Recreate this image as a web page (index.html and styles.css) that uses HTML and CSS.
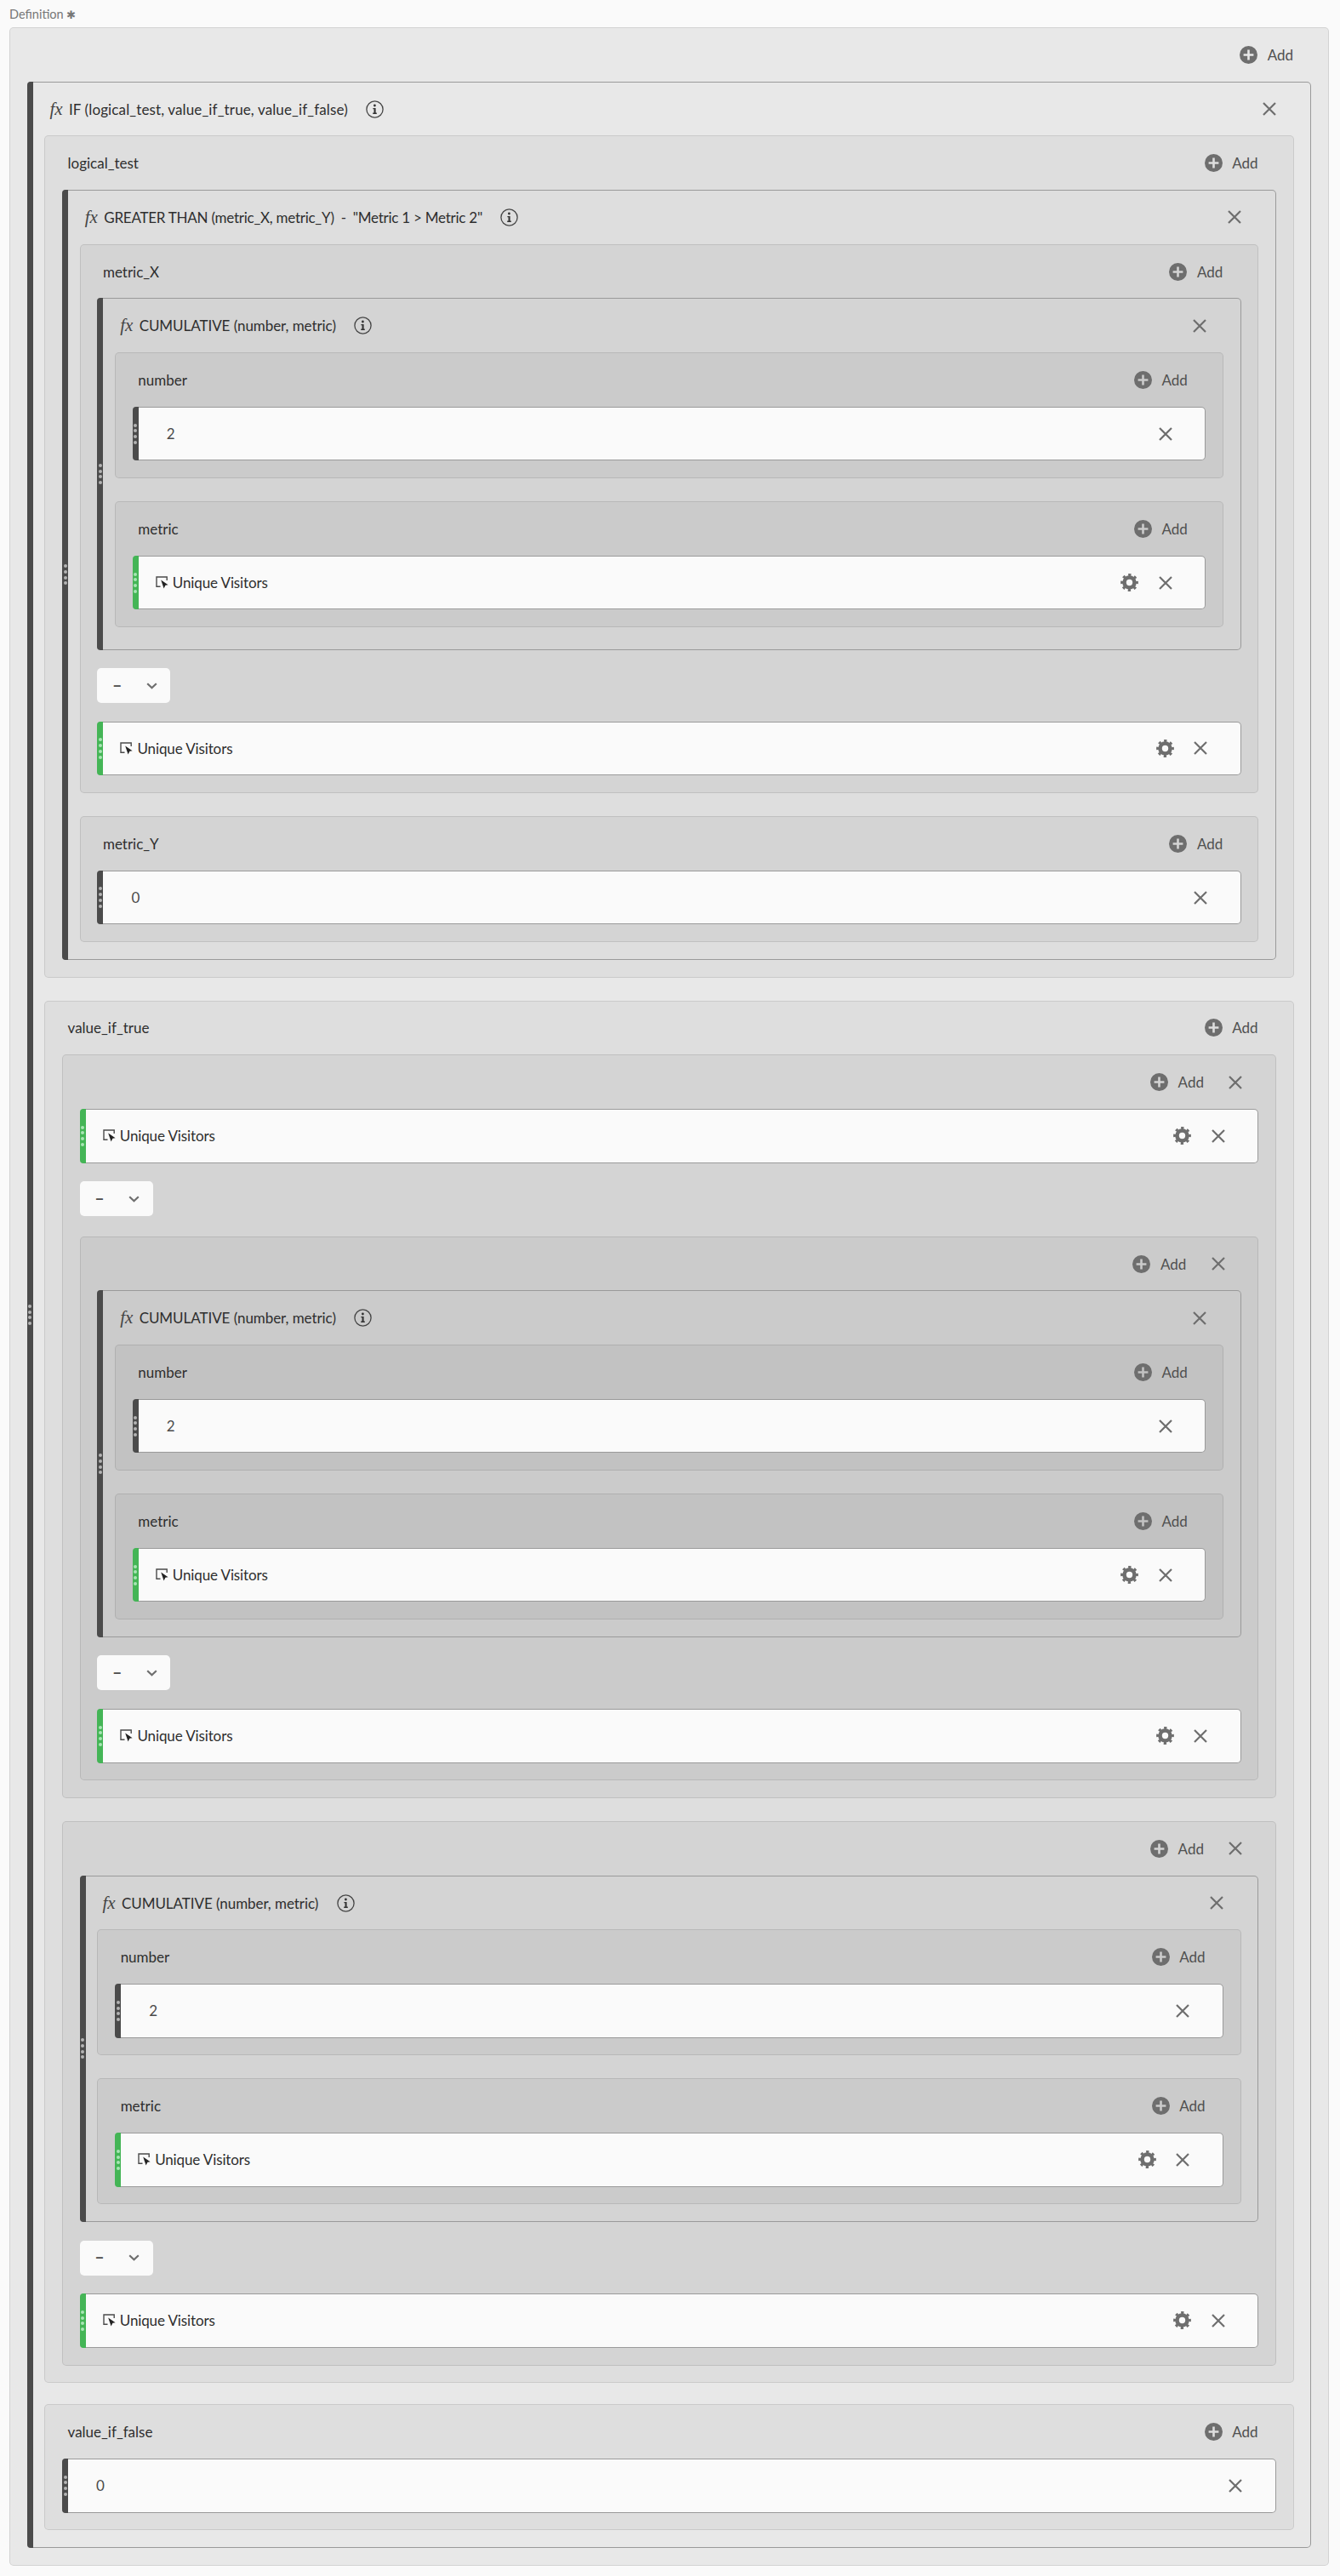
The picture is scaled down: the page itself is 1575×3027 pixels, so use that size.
FILE: index.html
```html
<!DOCTYPE html>
<html lang="en">
<head>
<meta charset="utf-8">
<title>Definition</title>
<link rel="stylesheet" href="styles.css">
</head>
<body>
<svg class="sprite" width="0" height="0" aria-hidden="true">
  <symbol id="i-plus" viewBox="0 0 21 21"><path fill-rule="evenodd" d="M10.5 0a10.5 10.5 0 1 0 0 21a10.5 10.5 0 1 0 0-21zM9.2 4.6h2.6v4.6h4.6v2.6h-4.6v4.6H9.2v-4.6H4.6V9.2h4.6z"/></symbol>
  <symbol id="i-x" viewBox="0 0 16 16"><path d="M1 1L15 15M15 1L1 15" fill="none" stroke-width="2.2"/></symbol>
  <symbol id="i-gear" viewBox="0 0 21 21"><circle cx="10.5" cy="10.5" r="6" fill="none" stroke-width="4.6"/><circle cx="10.5" cy="10.5" r="8.9" fill="none" stroke-width="3" stroke-dasharray="3.2 3.79" transform="rotate(-10.3 10.5 10.5)"/></symbol>
  <symbol id="i-metric" viewBox="0 0 15 15"><path d="M5.5 12.2H1V1h12.2v4" fill="none" stroke="#4b4b4b" stroke-width="1.4"/><path d="M6.2 4.4L14.6 10.2L11.4 10.8L9.6 14.6z" fill="#222"/></symbol>
  <symbol id="i-info" viewBox="0 0 21 21"><circle cx="10.5" cy="10.5" r="9.6" fill="none" stroke="#444" stroke-width="1.3"/><circle cx="10.4" cy="6" r="1.4" fill="#333"/><path d="M8.4 9h3.2v5.6h1.2v1.3H8.2v-1.3h1.3V10.3H8.4z" fill="#333"/></symbol>
  <symbol id="i-chev" viewBox="0 0 13 8"><path d="M1.2 1.2L6.5 6.2L11.8 1.2" fill="none" stroke-width="2.2"/></symbol>
</svg>

<div class="field-label">Definition <span class="req">✱</span></div>

<div class="panel lvl1 root">
  <div class="hdr"><button class="add"><svg class="ic-plus"><use href="#i-plus"/></svg>Add</button></div>

  <div class="fn">
    <div class="bar dark"><i></i><i></i><i></i><i></i></div>
    <div class="fn-body">
      <div class="fn-hdr"><span class="fx">fx</span><span class="title wide">IF (logical_test, value_if_true, value_if_false)</span><svg class="ic-info"><use href="#i-info"/></svg><svg class="ic-x push"><use href="#i-x"/></svg></div>

      <div class="panel lvl2">
        <div class="hdr"><span class="label">logical_test</span><button class="add"><svg class="ic-plus"><use href="#i-plus"/></svg>Add</button></div>
        <div class="fn">
          <div class="bar dark"><i></i><i></i><i></i><i></i></div>
          <div class="fn-body">
            <div class="fn-hdr"><span class="fx">fx</span><span class="title narrow">GREATER THAN (metric_X, metric_Y)<span class="dash">-</span>"Metric 1 &gt; Metric 2"</span><svg class="ic-info"><use href="#i-info"/></svg><svg class="ic-x push"><use href="#i-x"/></svg></div>

            <div class="panel lvl3">
              <div class="hdr"><span class="label">metric_X</span><button class="add"><svg class="ic-plus"><use href="#i-plus"/></svg>Add</button></div>
              <div class="fn tall">
                <div class="bar dark"><i></i><i></i><i></i><i></i></div>
                <div class="fn-body">
                  <div class="fn-hdr"><span class="fx">fx</span><span class="title">CUMULATIVE (number, metric)</span><svg class="ic-info"><use href="#i-info"/></svg><svg class="ic-x push"><use href="#i-x"/></svg></div>
                  <div class="panel lvl4">
                    <div class="hdr"><span class="label">number</span><button class="add"><svg class="ic-plus"><use href="#i-plus"/></svg>Add</button></div>
                    <div class="row"><div class="bar dark"><i></i><i></i><i></i><i></i></div><span class="value">2</span><svg class="ic-x push"><use href="#i-x"/></svg></div>
                  </div>
                  <div class="panel lvl4">
                    <div class="hdr"><span class="label">metric</span><button class="add"><svg class="ic-plus"><use href="#i-plus"/></svg>Add</button></div>
                    <div class="row"><div class="bar green"><i></i><i></i><i></i><i></i></div><svg class="ic-metric"><use href="#i-metric"/></svg><span class="name">Unique Visitors</span><svg class="ic-gear push"><use href="#i-gear"/></svg><svg class="ic-x"><use href="#i-x"/></svg></div>
                  </div>
                </div>
              </div>
              <div class="op"><span class="op-sign">−</span><svg class="ic-chev"><use href="#i-chev"/></svg></div>
              <div class="row"><div class="bar green"><i></i><i></i><i></i><i></i></div><svg class="ic-metric"><use href="#i-metric"/></svg><span class="name">Unique Visitors</span><svg class="ic-gear push"><use href="#i-gear"/></svg><svg class="ic-x"><use href="#i-x"/></svg></div>
            </div>

            <div class="panel lvl3">
              <div class="hdr"><span class="label">metric_Y</span><button class="add"><svg class="ic-plus"><use href="#i-plus"/></svg>Add</button></div>
              <div class="row"><div class="bar dark"><i></i><i></i><i></i><i></i></div><span class="value">0</span><svg class="ic-x push"><use href="#i-x"/></svg></div>
            </div>
          </div>
        </div>
      </div>

      <div class="panel lvl2">
        <div class="hdr"><span class="label">value_if_true</span><button class="add"><svg class="ic-plus"><use href="#i-plus"/></svg>Add</button></div>

        <div class="panel lvl3">
          <div class="hdr closable"><button class="add"><svg class="ic-plus"><use href="#i-plus"/></svg>Add</button><svg class="ic-x"><use href="#i-x"/></svg></div>
          <div class="row"><div class="bar green"><i></i><i></i><i></i><i></i></div><svg class="ic-metric"><use href="#i-metric"/></svg><span class="name">Unique Visitors</span><svg class="ic-gear push"><use href="#i-gear"/></svg><svg class="ic-x"><use href="#i-x"/></svg></div>
          <div class="op"><span class="op-sign">−</span><svg class="ic-chev"><use href="#i-chev"/></svg></div>

          <div class="panel lvl4">
            <div class="hdr closable"><button class="add"><svg class="ic-plus"><use href="#i-plus"/></svg>Add</button><svg class="ic-x"><use href="#i-x"/></svg></div>
            <div class="fn">
              <div class="bar dark"><i></i><i></i><i></i><i></i></div>
              <div class="fn-body">
                <div class="fn-hdr"><span class="fx">fx</span><span class="title">CUMULATIVE (number, metric)</span><svg class="ic-info"><use href="#i-info"/></svg><svg class="ic-x push"><use href="#i-x"/></svg></div>
                <div class="panel lvl5">
                  <div class="hdr"><span class="label">number</span><button class="add"><svg class="ic-plus"><use href="#i-plus"/></svg>Add</button></div>
                  <div class="row"><div class="bar dark"><i></i><i></i><i></i><i></i></div><span class="value">2</span><svg class="ic-x push"><use href="#i-x"/></svg></div>
                </div>
                <div class="panel lvl5">
                  <div class="hdr"><span class="label">metric</span><button class="add"><svg class="ic-plus"><use href="#i-plus"/></svg>Add</button></div>
                  <div class="row"><div class="bar green"><i></i><i></i><i></i><i></i></div><svg class="ic-metric"><use href="#i-metric"/></svg><span class="name">Unique Visitors</span><svg class="ic-gear push"><use href="#i-gear"/></svg><svg class="ic-x"><use href="#i-x"/></svg></div>
                </div>
              </div>
            </div>
            <div class="op"><span class="op-sign">−</span><svg class="ic-chev"><use href="#i-chev"/></svg></div>
            <div class="row"><div class="bar green"><i></i><i></i><i></i><i></i></div><svg class="ic-metric"><use href="#i-metric"/></svg><span class="name">Unique Visitors</span><svg class="ic-gear push"><use href="#i-gear"/></svg><svg class="ic-x"><use href="#i-x"/></svg></div>
          </div>
        </div>

        <div class="panel lvl3">
          <div class="hdr closable"><button class="add"><svg class="ic-plus"><use href="#i-plus"/></svg>Add</button><svg class="ic-x"><use href="#i-x"/></svg></div>
          <div class="fn">
            <div class="bar dark"><i></i><i></i><i></i><i></i></div>
            <div class="fn-body">
              <div class="fn-hdr"><span class="fx">fx</span><span class="title">CUMULATIVE (number, metric)</span><svg class="ic-info"><use href="#i-info"/></svg><svg class="ic-x push"><use href="#i-x"/></svg></div>
              <div class="panel lvl4">
                <div class="hdr"><span class="label">number</span><button class="add"><svg class="ic-plus"><use href="#i-plus"/></svg>Add</button></div>
                <div class="row"><div class="bar dark"><i></i><i></i><i></i><i></i></div><span class="value">2</span><svg class="ic-x push"><use href="#i-x"/></svg></div>
              </div>
              <div class="panel lvl4">
                <div class="hdr"><span class="label">metric</span><button class="add"><svg class="ic-plus"><use href="#i-plus"/></svg>Add</button></div>
                <div class="row"><div class="bar green"><i></i><i></i><i></i><i></i></div><svg class="ic-metric"><use href="#i-metric"/></svg><span class="name">Unique Visitors</span><svg class="ic-gear push"><use href="#i-gear"/></svg><svg class="ic-x"><use href="#i-x"/></svg></div>
              </div>
            </div>
          </div>
          <div class="op"><span class="op-sign">−</span><svg class="ic-chev"><use href="#i-chev"/></svg></div>
          <div class="row"><div class="bar green"><i></i><i></i><i></i><i></i></div><svg class="ic-metric"><use href="#i-metric"/></svg><span class="name">Unique Visitors</span><svg class="ic-gear push"><use href="#i-gear"/></svg><svg class="ic-x"><use href="#i-x"/></svg></div>
        </div>
      </div>

      <div class="panel lvl2 last">
        <div class="hdr"><span class="label">value_if_false</span><button class="add"><svg class="ic-plus"><use href="#i-plus"/></svg>Add</button></div>
        <div class="row"><div class="bar dark"><i></i><i></i><i></i><i></i></div><span class="value">0</span><svg class="ic-x push"><use href="#i-x"/></svg></div>
      </div>
    </div>
  </div>
</div>
</body>
</html>
```
FILE: styles.css
```css
* { box-sizing: border-box; }
html, body { margin: 0; padding: 0; }
body {
  background: #fafafa;
  color: #2e2e2e;
  font-family: Lato, "Open Sans", sans-serif;
  font-size: 17px;
  width: 1575px;
}
.sprite { position: absolute; }

.field-label {
  height: 32px;
  padding: 8px 0 0 11px;
  font-size: 14.5px;
  line-height: 18px;
  color: #777;
}
.req { font-family: "DejaVu Sans", sans-serif; font-size: 13px; }

.panel {
  border: 1px solid rgba(0, 0, 0, 0.09);
  border-radius: 5px;
  padding: 0 19.7px 19.75px;
}
.panel + .panel { margin-top: 27px; }
.panel.last { margin-top: 25px; }
.root { margin: 0 13px 0 11px; }
.lvl1 { background: #e8e8e8; }
.lvl2 { background: #dedede; }
.lvl3 { background: #d4d4d4; }
.lvl4 { background: #cbcbcb; }
.lvl5 { background: #c2c2c2; }

.hdr {
  display: flex;
  align-items: center;
  justify-content: flex-end;
  height: 62.7px;
  padding-right: 21.3px;
}
.hdr.closable { padding-right: 18.8px; }
.hdr.closable .add { margin-right: 29.5px; }
.label {
  margin-right: auto;
  padding-left: 6.5px;
  color: #2e2e2e;
}
.add {
  display: flex;
  align-items: center;
  gap: 11.5px;
  padding: 0;
  border: 0;
  background: none;
  font: inherit;
  color: #505050;
}

.fn {
  display: flex;
  border: 1px solid #9a9a9a;
  border-left: 0;
  border-radius: 5px;
}
.fn.tall .fn-body { padding-bottom: 25.5px; }
.fn-body {
  flex: 1;
  min-width: 0;
  padding: 0 19.7px 19.75px 13.7px;
}
.fn-hdr {
  display: flex;
  align-items: center;
  height: 62.7px;
  padding: 0 20.3px 0 6px;
}
.fx {
  width: 22.5px;
  font-family: "Liberation Serif", serif;
  font-style: italic;
  font-size: 21px;
  color: #444;
}
.title { letter-spacing: -0.06px; color: #2e2e2e; }
.title.wide { letter-spacing: 0.13px; }
.title.narrow { letter-spacing: -0.25px; }
.dash { margin: 0 8px; }

.bar {
  flex: none;
  align-self: stretch;
  width: 7px;
  margin: -1px 0;
  display: flex;
  flex-direction: column;
  align-items: center;
  justify-content: center;
  gap: 2.7px;
  border-radius: 4px 0 0 4px;
}
.bar i {
  width: 4px;
  height: 4px;
  border-radius: 50%;
}
.bar.dark { background: #4b4b4b; }
.bar.dark i { background: #b4b4b4; }
.bar.green { background: #44b556; }
.bar.green i { background: #a8e4b4; }

.row {
  display: flex;
  align-items: center;
  height: 63.6px;
  padding-right: 38.5px;
  background: #fafafa;
  border: 1px solid #9a9a9a;
  border-left: 0;
  border-radius: 5px;
}
.value {
  margin-left: 33px;
  color: #4b4b4b;
}
.name { margin-left: 5px; letter-spacing: -0.12px; color: #2e2e2e; }

.op {
  display: flex;
  align-items: center;
  justify-content: space-between;
  width: 86px;
  height: 41px;
  margin: 21.5px 0;
  padding: 0 15.5px 0 18px;
  background: #fafafa;
  border-radius: 5px;
  color: #4b4b4b;
}
.op-sign { font-size: 18px; line-height: 1; font-weight: 700; }
.op + .panel { margin-top: 23.7px; }

.push { margin-left: auto; }
.ic-plus { width: 21px; height: 21px; fill: #6e6e6e; flex: none; }
.ic-x { width: 16px; height: 16px; stroke: #6e6e6e; flex: none; }
.ic-gear { width: 21px; height: 21px; stroke: #6e6e6e; flex: none; margin-right: 23.5px; }
.ic-metric { width: 15px; height: 15px; margin-left: 20px; flex: none; }
.ic-info { width: 21px; height: 21px; margin-left: 21.5px; flex: none; }
.ic-chev { width: 13px; height: 8px; stroke: #6e6e6e; flex: none; }
```
